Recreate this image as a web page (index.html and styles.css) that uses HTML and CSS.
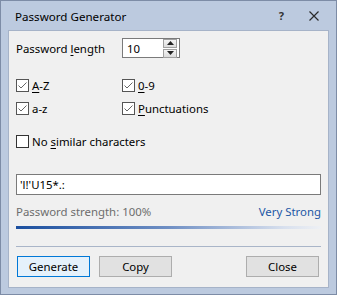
FILE: index.html
```html
<!DOCTYPE html>
<html>
<head>
<meta charset="utf-8">
<link rel="stylesheet" href="styles.css">
</head>
<body>
<div class="window">
  <div class="titlebar">
    <span class="title">Password Generator</span>
    <span class="help">?</span>
    <svg class="close-x" width="10" height="10" viewBox="0 0 10 10"><path d="M0.5 0.5 L9.5 9.5 M9.5 0.5 L0.5 9.5" stroke="#2b2b2b" stroke-width="1.2" fill="none"/></svg>
  </div>
  <div class="client">
    <div class="row-length">
      <span class="label">Password <u>l</u>ength</span>
      <div class="spinner">
        <span class="spin-value">10</span>
        <div class="spin-buttons">
          <div class="spin-btn"><svg width="7" height="4" viewBox="0 0 7 4"><path d="M0 4 L3.5 0 L7 4 Z" fill="#222"/></svg></div>
          <div class="spin-btn"><svg width="7" height="4" viewBox="0 0 7 4"><path d="M0 0 L3.5 4 L7 0 Z" fill="#222"/></svg></div>
        </div>
      </div>
    </div>
    <div class="checks">
      <label class="check"><svg class="box" width="13" height="13" viewBox="0 0 13 13"><rect x="0.5" y="0.5" width="12" height="12" fill="#fff" stroke="#555"/><path d="M2.5 6.5 L5 9 L10.5 3.5" stroke="#666" stroke-width="1" fill="none"/></svg><span><u>A</u>-Z</span></label>
      <label class="check"><svg class="box" width="13" height="13" viewBox="0 0 13 13"><rect x="0.5" y="0.5" width="12" height="12" fill="#fff" stroke="#555"/><path d="M2.5 6.5 L5 9 L10.5 3.5" stroke="#666" stroke-width="1" fill="none"/></svg><span><u>0</u>-9</span></label>
      <label class="check"><svg class="box" width="13" height="13" viewBox="0 0 13 13"><rect x="0.5" y="0.5" width="12" height="12" fill="#fff" stroke="#555"/><path d="M2.5 6.5 L5 9 L10.5 3.5" stroke="#666" stroke-width="1" fill="none"/></svg><span>a-z</span></label>
      <label class="check"><svg class="box" width="13" height="13" viewBox="0 0 13 13"><rect x="0.5" y="0.5" width="12" height="12" fill="#fff" stroke="#555"/><path d="M2.5 6.5 L5 9 L10.5 3.5" stroke="#666" stroke-width="1" fill="none"/></svg><span><u>P</u>unctuations</span></label>
    </div>
    <label class="check similar"><svg class="box" width="13" height="13" viewBox="0 0 13 13"><rect x="0.5" y="0.5" width="12" height="12" fill="#fff" stroke="#333"/></svg><span>No <u>s</u>imilar characters</span></label>
    <div class="textbox">'l!'U15*.:</div>
    <div class="strength">
      <span class="strength-label">Password strength: 100%</span>
      <span class="strength-value">Very Strong</span>
    </div>
    <div class="progress"></div>
    <div class="separator"></div>
    <div class="buttons">
      <button class="btn default">Generate</button>
      <button class="btn">Copy</button>
      <span class="spacer"></span>
      <button class="btn">Close</button>
    </div>
  </div>
</div>
</body>
</html>
```

FILE: styles.css
```css
html, body {
  margin: 0;
  padding: 0;
  background: #ffffff;
}

body {
  font-family: "Noto Sans", "Open Sans", sans-serif;
  font-size: 11.4px;
  color: #000;
}

.window {
  width: 337px;
  height: 295px;
  box-sizing: border-box;
  background: #bccadf;
  border: 1px solid #7d8ca6;
  display: flex;
  flex-direction: column;
  padding: 0 7px 6px 7px;
}

.titlebar {
  height: 29px;
  display: flex;
  align-items: center;
  padding-left: 7px;
  padding-right: 3px;
  flex: none;
}

.title {
  flex: 1;
  font-size: 11.6px;
  color: #000;
  padding-top: 1px;
}

.help {
  font-weight: bold;
  font-size: 11px;
  color: #333;
  margin-right: 25px;
}

.close-x {
  margin-right: 7px;
}

.client {
  flex: 1;
  background: #f0f0f0;
  border: 1px solid #a6b3c8;
  padding: 0 7px;
  display: flex;
  flex-direction: column;
}

.row-length {
  display: flex;
  align-items: center;
  margin-top: 7px;
  height: 20px;
}

.label {
  width: 106px;
}

u {
  text-decoration: underline;
  text-underline-offset: 2px;
}

.spinner {
  width: 52px;
  height: 18px;
  background: #fff;
  border: 1px solid #7a7a7a;
  display: flex;
  align-items: center;
  justify-content: space-between;
  padding-left: 4px;
  box-sizing: content-box;
}

.spin-buttons {
  display: flex;
  flex-direction: column;
  gap: 1px;
  padding: 1px 2px 1px 0;
}

.spin-btn {
  width: 12px;
  height: 7px;
  border: 1px solid #a0a0a0;
  background: linear-gradient(#f4f4f4, #dcdcdc);
  display: flex;
  align-items: center;
  justify-content: center;
}

.checks {
  display: grid;
  grid-template-columns: 106px 1fr;
  row-gap: 10px;
  margin-top: 21px;
}

.check {
  display: flex;
  align-items: center;
  height: 13px;
  gap: 3px;
}

.box {
  flex: none;
}

.similar {
  margin-top: 20px;
}

.textbox {
  margin-top: 26px;
  height: 19px;
  border: 1px solid #7a7a7a;
  background: #fff;
  display: flex;
  align-items: center;
  padding-left: 3px;
  box-sizing: content-box;
}

.strength {
  display: flex;
  justify-content: space-between;
  align-items: center;
  margin-top: 8px;
  height: 16px;
}

.strength-label {
  color: #6d6d6d;
}

.strength-value {
  color: #1c57a5;
}

.progress {
  margin-top: 7px;
  height: 3px;
  background: linear-gradient(to right, #1b4f9f 0%, #6f8fc4 50%, #d8e0ee 88%, #eef0f4 100%);
}

.separator {
  margin-top: 17px;
  height: 1px;
  background: #a9b5c8;
}

.buttons {
  display: flex;
  align-items: center;
  margin-top: 9px;
  padding-left: 1px;
  padding-right: 2px;
  gap: 9px;
}

.spacer {
  flex: 1;
}

.btn {
  width: 73px;
  height: 21px;
  font-family: inherit;
  font-size: 11.4px;
  color: #000;
  background: #e1e1e1;
  border: 1px solid #adadad;
  padding: 0;
  margin: 0;
}

.btn.default {
  background: #e5f1fb;
  border-color: #0078d7;
}
```
